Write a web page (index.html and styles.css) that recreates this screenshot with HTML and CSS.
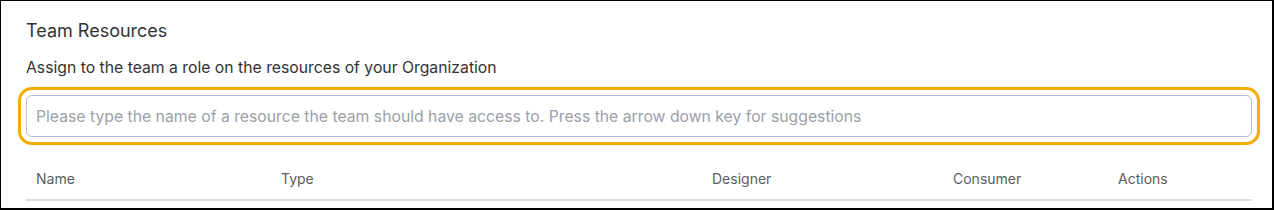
FILE: index.html
```html
<!DOCTYPE html>
<html>
<head>
<meta charset="utf-8">
<link rel="stylesheet" href="styles.css">
</head>
<body>
<div class="panel">
  <h2 class="title">Team Resources</h2>
  <p class="subtitle">Assign to the team a role on the resources of your Organization</p>
  <div class="search">
    <input class="search-input" type="text" placeholder="Please type the name of a resource the team should have access to. Press the arrow down key for suggestions">
  </div>
  <div class="table-head">
    <div class="th">Name</div>
    <div class="th">Type</div>
    <div class="th">Designer</div>
    <div class="th">Consumer</div>
    <div class="th">Actions</div>
  </div>
</div>
</body>
</html>
```
FILE: styles.css
```css
html, body {
  margin: 0;
  padding: 0;
  background: #fff;
}
.panel {
  box-sizing: border-box;
  width: 1274px;
  height: 210px;
  border-top: 1px solid #000;
  border-left: 1px solid #000;
  border-right: 2px solid #000;
  border-bottom: 2px solid #000;
  padding: 0 20px 0 25px;
  font-family: Inter, "Noto Sans", sans-serif;
  color: #333;
}
.title {
  margin: 19px 0 0;
  font-size: 18px;
  font-weight: 400;
  line-height: 22px;
  color: #333;
}
.subtitle {
  margin: 16px 0 0;
  font-size: 15.75px;
  line-height: 20px;
  color: #333;
}
.search {
  margin-top: 17px;
  width: 1226px;
}
.search-input {
  box-sizing: border-box;
  display: block;
  width: 100%;
  height: 42px;
  margin: 0;
  padding: 0 9px;
  border: 1px solid #b9bec7;
  border-radius: 6px;
  font-family: Inter, "Noto Sans", sans-serif;
  font-size: 15.75px;
  color: #333;
  box-shadow: 0 0 0 5px #fff, 0 0 0 8px #f6ab00;
  outline: none;
}
.search-input::placeholder {
  color: #9a9fa8;
}
.table-head {
  display: grid;
  grid-template-columns: 245px 431px 241px 165px 144px;
  width: 1226px;
  margin-top: 32px;
  border-bottom: 2px solid #dcdcdc;
}
.th {
  padding: 0 10px 10px;
  font-size: 14px;
  line-height: 20px;
  font-weight: 400;
  color: #5c5c5c;
}
```
